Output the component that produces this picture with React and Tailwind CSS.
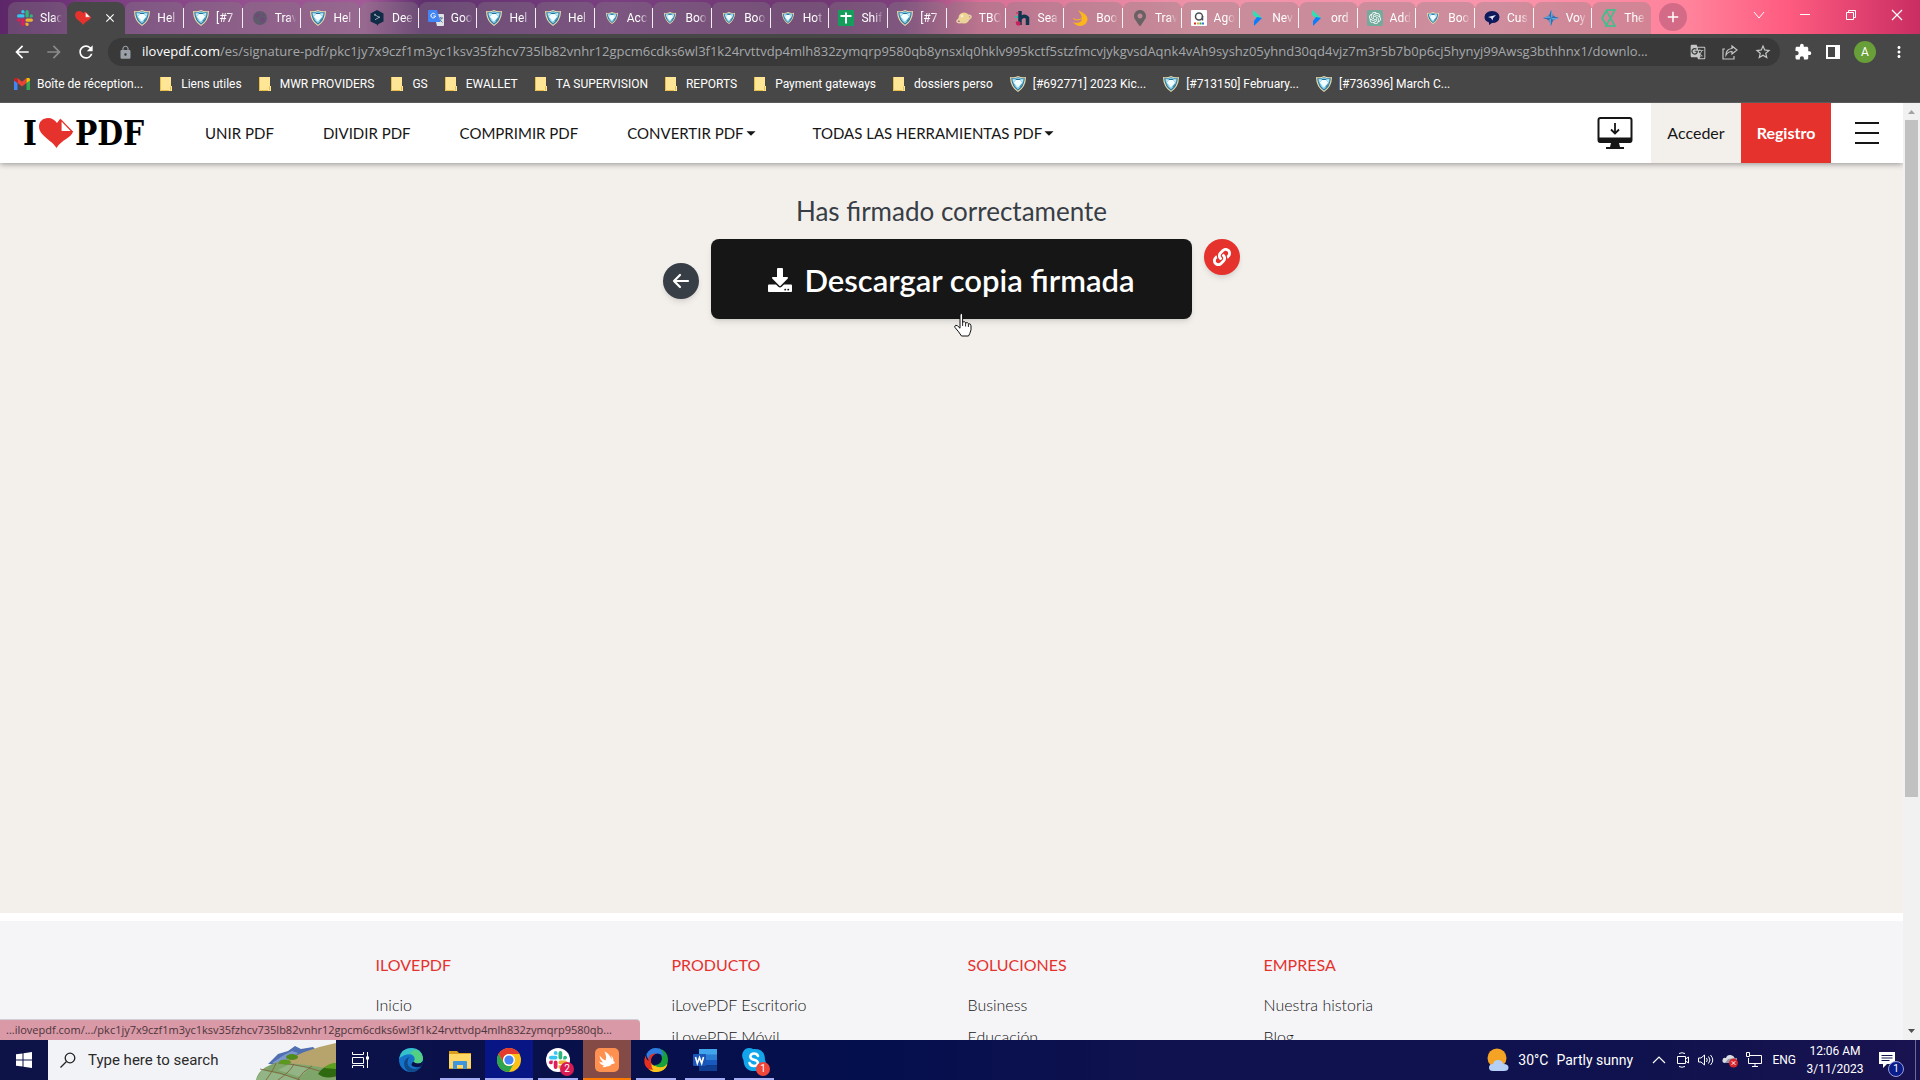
import {
  MdArrowBack,
  MdArrowForward,
  MdRefresh,
  MdLock,
  MdStarBorder,
  MdExtension,
  MdMoreVert,
  MdGTranslate,
  MdAdd,
  MdClose,
  MdArrowDropDown,
} from "react-icons/md";
import { FaDownload, FaLink, FaMapMarkerAlt } from "react-icons/fa";
import { SiOpenai } from "react-icons/si";
import clsx from "clsx";

const URL_HOST = "ilovepdf.com";
const URL_PATH =
  "/es/signature-pdf/pkc1jy7x9czf1m3yc1ksv35fzhcv735lb82vnhr12gpcm6cdks6wl3f1k24rvttvdp4mlh832zymqrp9580qb8ynsxlq0hklv995kctf5stzfmcvjykgvsdAqnk4vAh9syshz05yhnd30qd4vjz7m3r5b7b0p6cj5hynyj99Awsg3bthhnx1/downlo...";
const STATUS_URL =
  "...ilovepdf.com/.../pkc1jy7x9czf1m3yc1ksv35fzhcv735lb82vnhr12gpcm6cdks6wl3f1k24rvttvdp4mlh832zymqrp9580qb...";

/* ---------- favicons ---------- */

function Slack({ className = "size-4" }) {
  const petal =
    "M5.04 15.17a2.52 2.52 0 1 1-2.52-2.52h2.52zM6.31 15.17a2.52 2.52 0 0 1 5.04 0v6.31a2.52 2.52 0 0 1-5.04 0z";
  return (
    <svg viewBox="0 0 24 24" className={className}>
      <path d={petal} fill="#e01e5a" />
      <path d={petal} fill="#36c5f0" transform="rotate(90 12 12)" />
      <path d={petal} fill="#2eb67d" transform="rotate(180 12 12)" />
      <path d={petal} fill="#ecb22e" transform="rotate(270 12 12)" />
    </svg>
  );
}

function Heart({ className = "size-4" }) {
  return (
    <svg viewBox="0 0 34 30" className={className}>
      <path
        d="M17.500 30C13 22 0 18 0 8.500 0 3.500 4 0 9 0c4 0 7 2 9 5l3-4 13 12.500c-1 6-12 8.500-16.500 16.500z"
        fill="#e5322d"
      />
      <path d="M22 2v11.500h11z" fill="#fff" stroke="#e5322d" strokeWidth="1.200" />
    </svg>
  );
}

function Shield({ className = "size-4" }) {
  return (
    <svg viewBox="0 0 16 16" className={className}>
      <path d="M0 1q4 1 8-1 4 2 8 1 0 10-8 15Q0 11 0 1z" fill="#e9dcae" />
      <path d="M1.200 2.200q3.500.5 6.800-1 3.300 1.500 6.800 1-.5 8.500-6.800 12.500Q1.700 10.500 1.200 2.200z" fill="#2b7296" />
      <path d="M2.200 2.800q3 0 5.800-1.200Q10.800 2.800 13.800 2.800q-.5 7-5.800 10.800Q2.700 9.800 2.200 2.800z" fill="#7cc9e8" />
      <path d="M6 4h4l2.200 2.700L8 11.500 3.800 6.700z" fill="#f2fdff" />
      <path d="M3 3.500l2.500.3L3.600 6zM13 3.500l-2.500.3L12.400 6zM5 9l2 1.500.5 1.800z" fill="#d8f2fb" />
      <path d="M5.500 3h5l-1 1h-3zM12.500 7l-3 4 1.500-.5zM3 6.500l1 1.500.5 2z" fill="#246a8e" />
    </svg>
  );
}

function SmallShield() {
  return (
    <span className="flex size-4 items-center justify-center">
      <Shield className="size-3" />
    </span>
  );
}

function Globe() {
  return (
    <svg viewBox="0 0 16 16" className="size-4">
      <circle cx="8" cy="8" r="7" fill="#5f5a6c" />
      <path d="M3 5l3-2 2 1-1 3-3 1zM8 8l4-1 1 3-3 3-2-2zM10 3l3 2-2 1z" fill="#6f4a78" />
    </svg>
  );
}

function DeepL() {
  return (
    <svg viewBox="0 0 16 16" className="size-4">
      <path d="M8 0l6.500 3.500v8L9.500 14 8 16v-1.500L1.500 11.500v-8z" fill="#0f2b46" />
      <path d="M6 4.800l4 2.500-4 2.500" fill="none" stroke="#8ea5b5" />
      <circle cx="6" cy="4.800" r="1" fill="#8ea5b5" />
      <circle cx="10" cy="7.300" r="1" fill="#8ea5b5" />
    </svg>
  );
}

function Translate() {
  return (
    <svg viewBox="0 0 16 16" className="size-4">
      <path d="M6 4h9q1 0 1 1v10q0 1-1 1H9z" fill="#dfe3e6" />
      <path d="M10 8h5M12.500 7v1M11 12l3-4M11.500 9.500l3 3" stroke="#5f7d92" fill="none" />
      <path d="M1 0h8l3.500 12H1q-1 0-1-1V1q0-1 1-1z" fill="#4285f4" />
      <path d="M7.200 4.400A2.300 2.300 0 1 0 7.500 6H5.500" stroke="#fff" fill="none" />
    </svg>
  );
}

function Sheets() {
  return (
    <svg viewBox="0 0 16 16" className="size-4">
      <rect width="16" height="16" rx="1" fill="#159e5b" />
      <path d="M8 2.500v11M2.500 6h11" stroke="#fff" strokeWidth="2" />
    </svg>
  );
}

function Planet() {
  return (
    <svg viewBox="0 0 16 16" className="size-4">
      <circle cx="8" cy="8" r="5.500" fill="#eed58d" />
      <ellipse cx="8" cy="9" rx="7.500" ry="2.500" fill="none" stroke="#e9cfa6" strokeWidth="1.500" transform="rotate(-22 8 9)" />
      <circle cx="6" cy="6" r="1.500" fill="#f8ecc4" />
    </svg>
  );
}

function Hotelbeds() {
  return (
    <svg viewBox="0 0 16 16" className="size-4">
      <path d="M5 1v14M5 9q4-5 7.500-1V15" stroke="#12354f" strokeWidth="3.500" fill="none" />
      <path d="M1 3h3M1 12h4v3H2z" stroke="#c5255a" strokeWidth="1" fill="#c5255a" />
      <path d="M0 7h3" stroke="#34b7a7" strokeWidth="2" />
    </svg>
  );
}

function Crescent() {
  return (
    <svg viewBox="0 0 16 16" className="size-4">
      <path d="M5 0q3 1.500 6 3.500 3.500 2.500 3.500 6Q13.500 16 7 16q-4 0-7-4 5 2 8-.5Q11 8 5 0z" fill="#fbb61a" />
      <path d="M0 8.500q5 3 9-.5" stroke="#fbb61a" fill="none" />
    </svg>
  );
}

function Agoda() {
  return (
    <svg viewBox="0 0 16 16" className="size-4">
      <rect width="16" height="16" rx="1" fill="#fff" />
      <circle cx="8" cy="6.500" r="3.500" fill="none" stroke="#4b4f54" strokeWidth="1.500" />
      <path d="M11.500 6v4.500" stroke="#4b4f54" strokeWidth="1.500" />
      <path d="M3 13.500h2" stroke="#e12d2d" strokeWidth="2" />
      <path d="M6 13.500h2" stroke="#f5a623" strokeWidth="2" />
      <path d="M8.500 13.500h2" stroke="#29a745" strokeWidth="2" />
      <path d="M11 13.500h2" stroke="#3a6fe0" strokeWidth="2" />
    </svg>
  );
}

function Arrow() {
  return (
    <svg viewBox="0 0 16 16" className="size-4">
      <path d="M4 0l9 8H8L4 5z" fill="#2fe0b5" />
      <path d="M13 8l-8 8v-5l3-4z" fill="#0a7cff" />
    </svg>
  );
}

function OpenAi() {
  return (
    <span className="flex size-4 items-center justify-center rounded-xs bg-[#74aa9c] text-white">
      <SiOpenai size={12} />
    </span>
  );
}

function BlueBubble() {
  return (
    <svg viewBox="0 0 16 16" className="size-4">
      <path d="M8 1q7 .5 7.500 6Q15 13 8 13l-3 2v-2.500Q.5 11 .5 7 1 1.500 8 1z" fill="#0e1a5b" />
      <path d="M4 7l8-2-3 3-.5 2.500L7 8z" fill="#e7eaf5" />
    </svg>
  );
}

function Compass() {
  return (
    <svg viewBox="0 0 16 16" className="size-4">
      <circle cx="8" cy="8" r="3.500" fill="none" stroke="#8d7390" />
      <path d="M8 0l2 6 6 2-6 2-2 6-2-6-6-2 6-2z" fill="#2c6fb0" />
      <path d="M8 0v8l2-2zM16 8H8l2 2zM8 16V8l-2 2zM0 8h8L6 6z" fill="#5fa4d8" />
    </svg>
  );
}

function GreenMark() {
  return (
    <svg viewBox="0 0 16 18" className="h-[18px] w-4">
      <path d="M6 1L1 9l5 8M5 1h9L5 17h9L5 1" fill="none" stroke="#2ec68c" strokeWidth="1.500" />
    </svg>
  );
}

function Gmail() {
  return (
    <svg viewBox="0 0 16 12" className="h-3 w-4">
      <path d="M0 1.500V12h3.500V5z" fill="#4285f4" />
      <path d="M16 1.500V12h-3.500V5z" fill="#34a853" />
      <path d="M3.500 0L8 3.700 12.500 0v5L8 8.500 3.500 5z" fill="#ea4335" />
      <path d="M0 1.500Q.5-1 3.500 0v5L0 2.500z" fill="#c5221f" />
      <path d="M16 1.500Q15.500-1 12.500 0v5L16 2.500z" fill="#fbbc04" />
    </svg>
  );
}

function Folder() {
  return (
    <svg viewBox="0 0 12 14" className="h-3.5 w-3">
      <path d="M0 0h11v9h1v5H0z" fill="#ffe596" />
      <path d="M10.500 9.500v4M.5 0v13.500H9" stroke="#e8be4a" fill="none" />
    </svg>
  );
}

const TABS = [
  { title: "Slac", icon: <Slack /> },
  { title: "iLovePDF", icon: <Heart />, active: true },
  { title: "Hel", icon: <Shield /> },
  { title: "[#7", icon: <Shield /> },
  { title: "Trav", icon: <Globe /> },
  { title: "Hel", icon: <Shield /> },
  { title: "Dee", icon: <DeepL /> },
  { title: "Goo", icon: <Translate /> },
  { title: "Hel", icon: <Shield /> },
  { title: "Hel", icon: <Shield /> },
  { title: "Acc", icon: <SmallShield /> },
  { title: "Boo", icon: <SmallShield /> },
  { title: "Boo", icon: <SmallShield /> },
  { title: "Hot", icon: <SmallShield /> },
  { title: "Shif", icon: <Sheets /> },
  { title: "[#7", icon: <Shield /> },
  { title: "TBO", icon: <Planet /> },
  { title: "Sea", icon: <Hotelbeds /> },
  { title: "Boo", icon: <Crescent /> },
  { title: "Trav", icon: <FaMapMarkerAlt size={16} className="text-[#6a6165]" /> },
  { title: "Ago", icon: <Agoda /> },
  { title: "Nev", icon: <Arrow /> },
  { title: "ord", icon: <Arrow /> },
  { title: "Add", icon: <OpenAi /> },
  { title: "Boo", icon: <SmallShield /> },
  { title: "Cus", icon: <BlueBubble /> },
  { title: "Voy", icon: <Compass /> },
  { title: "The", icon: <GreenMark /> },
];

const BOOKMARKS = [
  { label: "Boîte de réception...", icon: <Gmail /> },
  { label: "Liens utiles" },
  { label: "MWR PROVIDERS" },
  { label: "GS" },
  { label: "EWALLET" },
  { label: "TA SUPERVISION" },
  { label: "REPORTS" },
  { label: "Payment gateways" },
  { label: "dossiers perso" },
  { label: "[#692771] 2023 Kic...", icon: <Shield /> },
  { label: "[#713150] February...", icon: <Shield /> },
  { label: "[#736396] March C...", icon: <Shield /> },
];

const FOOTER = [
  { heading: "ILOVEPDF", links: ["Inicio"] },
  { heading: "PRODUCTO", links: ["iLovePDF Escritorio", "iLovePDF Móvil"] },
  { heading: "SOLUCIONES", links: ["Business", "Educación"] },
  { heading: "EMPRESA", links: ["Nuestra historia", "Blog"] },
];

/* ---------- browser chrome ---------- */

function Tab({ title, icon, active, divider }) {
  if (active) {
    return (
      <div role="tab" aria-selected="true" aria-label={title} className="flex items-center justify-between rounded-t-lg bg-[#474747] px-2 text-white">
        {icon}
        <button aria-label="Close tab"><MdClose size={14} /></button>
      </div>
    );
  }
  return (
    <div role="tab" aria-selected="false" className="flex items-center justify-between rounded-t-lg bg-[#808080]/35 pl-[9px] text-white">
      <span className="shrink-0">{icon}</span>
      <span className="ml-[7px] w-[26px] whitespace-nowrap text-xs [mask-image:linear-gradient(to_right,black_50%,transparent_85%)]">
        {title}
      </span>
      <span className={clsx("h-5 w-px shrink-0", divider && "bg-white/90")} />
    </div>
  );
}

function TabStrip() {
  return (
    <div className="flex h-[34px] shrink-0 bg-[linear-gradient(90deg,#5d2668_0%,#7d3f83_6%,#95508f_13%,#a35b98_19%,#60306f_22%,#7a3f80_32%,#6f3672_42%,#80407e_47%,#d96e96_51%,#ee92a8_62%,#f994ac_78%,#ff829b_88%,#ff5c80_93%,#c92d62_100%)] pl-2">
      <div role="tablist" className="grid min-w-0 flex-1 auto-cols-fr grid-flow-col pt-0.5">
        {TABS.map((tab, i) => (
          <Tab key={i} {...tab} divider={i > 1 && i < TABS.length - 1} />
        ))}
      </div>
      <div className="flex w-[269px] shrink-0 items-center justify-between pl-2 text-white">
        <button aria-label="New tab" className="flex size-7 items-center justify-center rounded-full bg-[#c0607e]/70">
          <MdAdd size={18} />
        </button>
        <div className="flex h-full items-start gap-8 pr-4 pt-2">
          <button aria-label="Search tabs"><svg viewBox="0 0 14 14" className="size-3.5"><path d="M2 4l5 6 5-6" fill="none" stroke="#fff" /></svg></button>
          <button aria-label="Minimize"><svg viewBox="0 0 14 14" className="size-3.5"><path d="M2 6.500h10" stroke="#fff" /></svg></button>
          <button aria-label="Restore"><svg viewBox="0 0 14 14" className="size-3.5"><path d="M2.500 4.500h7v7h-7zM4.500 4.500v-2h7v7h-2" fill="none" stroke="#fff" /></svg></button>
          <button aria-label="Close"><svg viewBox="0 0 14 14" className="size-3.5"><path d="M2 2l10 10M12 2L2 12" stroke="#fff" strokeWidth="1.200" /></svg></button>
        </div>
      </div>
    </div>
  );
}

function Toolbar() {
  return (
    <div className="flex h-9 shrink-0 items-center bg-[#474747] text-white">
      <div className="flex w-[108px] shrink-0 items-center gap-3 pl-3">
        <button aria-label="Back"><MdArrowBack size={20} /></button>
        <button aria-label="Forward" className="text-[#8b8b8b]"><MdArrowForward size={20} /></button>
        <button aria-label="Reload"><MdRefresh size={20} /></button>
      </div>
      <div className="flex h-7 min-w-0 flex-1 items-center rounded-full bg-[#393939] pl-2.5 pr-2 text-[#c4c7c5]">
        <MdLock size={15} className="shrink-0 text-[#9aa0a6]" />
        <span className="ml-[9px] min-w-0 flex-1 overflow-hidden whitespace-nowrap font-['Open_Sans',sans-serif] text-[13px] text-[#a5a8ab]">
          <span className="text-white">{URL_HOST}</span>
          {URL_PATH}
        </span>
        <div className="flex shrink-0 items-center gap-4">
          <button aria-label="Translate"><MdGTranslate size={16} /></button>
          <button aria-label="Share">
            <svg viewBox="0 0 16 16" className="size-4" fill="none" stroke="currentColor" strokeWidth="1.200">
              <path d="M3 5H1v10h11v-3" />
              <path d="M10 2l5 4-5 4V7.500Q6 7.500 4 11q0-6 6-6.500z" />
            </svg>
          </button>
          <button aria-label="Bookmark"><MdStarBorder size={18} /></button>
        </div>
      </div>
      <div className="flex w-[140px] shrink-0 items-center justify-between pl-3.5 pr-3">
        <button aria-label="Extensions"><MdExtension size={18} /></button>
        <button aria-label="Side panel">
          <svg viewBox="0 0 14 14" className="size-3.5"><path d="M1 1h12v12H1z" fill="none" stroke="#fff" strokeWidth="2" /><path d="M9 1h5v12H9z" fill="#fff" /></svg>
        </button>
        <button aria-label="Profile" className="flex size-[22px] items-center justify-center rounded-full bg-[#689f38] text-xs">A</button>
        <button aria-label="Menu"><MdMoreVert size={18} /></button>
      </div>
    </div>
  );
}

function Bookmarks() {
  return (
    <nav className="flex h-[33px] shrink-0 items-center gap-[17px] overflow-hidden border-b border-[#5a5a5a] bg-[#474747] pb-1 pl-3.5 text-xs text-white">
      {BOOKMARKS.map(({ label, icon }) => (
        <a key={label} href="#" className={clsx("flex shrink-0 items-center whitespace-nowrap", icon ? "gap-[7px]" : "gap-[9px]")}>
          {icon ?? <Folder />}
          {label}
        </a>
      ))}
    </nav>
  );
}

function Scrollbar() {
  return (
    <div aria-hidden="true" className="flex w-[17px] shrink-0 flex-col items-center bg-[#f1f1f1]">
      <svg viewBox="0 0 17 17" className="h-[17px] w-full shrink-0"><path d="M5 11h7L8.500 7z" fill="#a3a3a3" /></svg>
      <div className="min-h-0 w-full flex-1 px-0.5"><div className="h-3/4 bg-[#c1c1c1]" /></div>
      <svg viewBox="0 0 17 17" className="h-[17px] w-full shrink-0"><path d="M5 6h7l-3.500 4z" fill="#505050" /></svg>
    </div>
  );
}

/* ---------- web page ---------- */

function SiteHeader() {
  return (
    <header className="z-10 flex h-[60px] shrink-0 items-center bg-white pl-[23px] text-[15px] text-[#161616] shadow-[0_1px_6px_rgba(0,0,0,0.4)]">
      <a href="#" aria-label="iLovePDF" className="flex items-center font-['DejaVu_Serif_Condensed','DejaVu_Serif',serif] text-[33px] font-bold leading-none text-black">
        I
        <Heart className="mx-0.5 h-[30px] w-[34px]" />
        PDF
      </a>
      <nav className="ml-[61px] flex flex-1 items-center gap-[49px] whitespace-nowrap">
        <a href="#">UNIR PDF</a>
        <a href="#">DIVIDIR PDF</a>
        <a href="#">COMPRIMIR PDF</a>
        <button className="flex items-center">CONVERTIR PDF<MdArrowDropDown size={22} className="-ml-1 -mr-1.5" /></button>
        <button className="ml-2 flex items-center">TODAS LAS HERRAMIENTAS PDF<MdArrowDropDown size={22} className="-ml-1 -mr-1.5" /></button>
      </nav>
      <a href="#" aria-label="Escritorio" className="mr-[18px]">
        <svg viewBox="0 0 36 34" className="h-[34px] w-9">
          <rect x="1.500" y="2" width="33" height="24" rx="2" fill="none" stroke="#161616" strokeWidth="2" />
          <path d="M1.500 21.500h33V25q0 1.500-1.500 1.500H3q-1.500 0-1.500-1.500z" fill="#161616" />
          <path d="M14 27h8l1 4h4v2H9v-2h4z" fill="#161616" />
          <path d="M18 7v10M14 13.500l4 4 4-4" fill="none" stroke="#161616" strokeWidth="1.800" />
        </svg>
      </a>
      <a href="#" className="flex h-full w-[90px] items-center justify-center bg-[#f3f0ec] text-base">Acceder</a>
      <a href="#" className="flex h-full w-[90px] items-center justify-center bg-[#e5322d] text-base font-bold text-white">Registro</a>
      <button aria-label="Menú" className="flex w-[72px] flex-col items-center gap-2">
        <span className="h-0.5 w-6 bg-[#161616]" />
        <span className="h-0.5 w-6 bg-[#161616]" />
        <span className="h-0.5 w-6 bg-[#161616]" />
      </button>
    </header>
  );
}

function HandCursor() {
  return (
    <svg viewBox="0 0 18 24" className="absolute left-[243px] top-[74px] h-6 w-[18px]">
      <path
        d="M6 2q0-1.500 1.300-1.500T8.600 2v7q2.500-1 3 .8 2.300-.6 2.800.8 2.600 0 2.600 2.200v4q-1 4-2.500 6.200H7.500Q5 19 1 14.500q-.8-1.800.8-2.300 1.600 0 4.200 3z"
        fill="#fff"
        stroke="#111"
        strokeWidth="1"
      />
      <path d="M8.600 9v4M11.600 10v3.500M14.400 11v3" stroke="#111" strokeWidth="0.900" />
    </svg>
  );
}

function Download() {
  return (
    <main className="flex shrink-0 basis-4/5 flex-col items-center bg-[#f3f0ec] pt-8">
      <h1 className="text-[26px] leading-8 text-[#383e45]">Has firmado correctamente</h1>
      <div className="mt-3 flex gap-3">
        <button aria-label="Volver" className="mt-6 flex size-9 items-center justify-center rounded-full bg-[#383e45] text-white shadow-md">
          <svg viewBox="0 0 18 18" className="size-[18px]" fill="none" stroke="currentColor" strokeWidth="2.200" strokeLinecap="round" strokeLinejoin="round">
            <path d="M16 9H2M8 3L2 9l6 6" />
          </svg>
        </button>
        <div className="relative">
          <button className="flex h-20 w-[481px] items-center justify-center gap-3 rounded-lg bg-[#161616] pt-0.5 text-[31px] font-semibold text-white shadow-md">
            <FaDownload size={24} />
            Descargar copia firmada
          </button>
          <HandCursor />
        </div>
        <button aria-label="Copiar enlace" className="flex size-9 items-center justify-center rounded-full bg-[#e5322d] text-white shadow-md">
          <FaLink size={18} />
        </button>
      </div>
    </main>
  );
}

function Footer() {
  return (
    <footer className="shrink-0 border-t-8 border-white bg-[#f5f5f8] pb-10 pt-8 text-base">
      <div className="mx-auto grid max-w-[1184px] grid-cols-4">
        {FOOTER.map(({ heading, links }) => (
          <section key={heading} className="px-4">
            <h2 className="leading-6 text-[#e5322d]">{heading}</h2>
            <ul className="mt-3 font-light text-[#161616]">
              {links.map((link) => (
                <li key={link} className="leading-8"><a href="#">{link}</a></li>
              ))}
            </ul>
          </section>
        ))}
      </div>
    </footer>
  );
}

/* ---------- taskbar ---------- */

function Landscape() {
  return (
    <svg viewBox="0 0 80 40" className="h-full w-20">
      <path d="M12 24L22 14l10-3 7-5 6 3 12-2 6 6-25 12z" fill="#4f6fb0" />
      <path d="M16 23l12-8 8-4 6 2-10 10z" fill="#7d97cd" />
      <path d="M20 26Q45 10 80 3v37H6z" fill="#b7a36c" />
      <path d="M0 40Q2 28 22 22q35 3 58 8v10z" fill="#7fa56b" />
      <path d="M6 30l26 6 10 4H0zM34 24l20 4-10 9-22-7z" fill="#93b585" />
      <path d="M4 29q20 3 40 11M20 23q-2 6-10 17M38 24q-4 8-16 16M56 26q-10 6-14 13M22 23q30 2 58 14" fill="none" stroke="#7c5d3b" strokeWidth=".8" />
      <ellipse cx="36" cy="17" rx="6" ry="3" fill="#4e8a1c" />
      <ellipse cx="29" cy="22" rx="6" ry="2.500" fill="#5b981f" />
      <path d="M62 34q4-8 18-11v13q-10 4-18-2z" fill="#2f6a10" />
      <path d="M68 28q5-5 12-5v6z" fill="#5fa022" />
    </svg>
  );
}

function Edge() {
  return (
    <svg viewBox="0 0 24 24" className="size-6">
      <circle cx="12" cy="12" r="12" fill="#1473c8" />
      <path d="M0 11Q2 0 12.500 0 23 .5 24 10q0 5-5 5.500-4 0-4.500-2 2-1.500 1-4Q13 5 8 6.500 2 8 0 11z" fill="#35c1c9" />
      <path d="M16 1.500q7 2 8 9-1 5-5 5-4 0-4.500-2 2-1.500 1-4.500Q14 6 11 5z" fill="#5bd36f" opacity=".8" />
      <path d="M9 12q-2 6 4 8.500 5 1.500 9-2Q18 24 12 24 5 22.500 5 15q1-5 6-6-2 1-2 3z" fill="#114a8b" />
      <path d="M14.500 13.500q1 2 4.500 2 3.500 0 4.800-2.500.4 3-1.800 5.500-5 1.500-9-.5-1.500-2 1.500-4.500z" fill="#0b1149" />
    </svg>
  );
}

function Explorer() {
  return (
    <svg viewBox="0 0 24 20" className="h-5 w-6">
      <path d="M1 1h8l2 2h12v16H1z" fill="#d99e1b" />
      <path d="M1 4h22v14H1z" fill="#ffd766" />
      <path d="M5 19v-7q0-1 1-1h12q1 0 1 1v7h-4v-4H9v4z" fill="#3f96dd" />
    </svg>
  );
}

function Chrome() {
  return (
    <svg viewBox="0 0 24 24" className="size-6">
      <circle cx="12" cy="12" r="12" fill="#fbc116" />
      <path d="M1.600 6A12 12 0 0 1 22.400 6H12a6 6 0 0 0-5.200 9z" fill="#e33b2e" />
      <path d="M1.600 6a12 12 0 0 0 10.400 18l5.200-9a6 6 0 0 1-10.400 0z" fill="#2da44e" />
      <circle cx="12" cy="12" r="6" fill="#fff" />
      <circle cx="12" cy="12" r="4.600" fill="#4285f4" />
    </svg>
  );
}

function Badge({ children, className }) {
  return (
    <span className={clsx("absolute -bottom-1 -right-1 flex size-3.5 items-center justify-center rounded-full text-[10px] leading-none text-white", className)}>
      {children}
    </span>
  );
}

function SlackApp() {
  return (
    <span className="relative flex size-6 items-center justify-center rounded-full bg-white">
      <Slack className="size-[18px]" />
      <Badge className="bg-[#d81b52]">2</Badge>
    </span>
  );
}

function Swift() {
  return (
    <svg viewBox="0 0 24 24" className="size-6">
      <rect width="24" height="24" rx="5" fill="#ff9150" />
      <path
        d="M9.500 3.500q5 2 7 8 .5-2-.5-4.500 2.500 2.500 2.500 6 2 1 1 2.500L17 16q-2 2.500-5.500 2.500-1.500 1-4 .5l1.500-1.500q-3.500-.5-5-4 2 1 4 1Q4.500 11 4.500 7.500 7 11 10.500 12.500 12 9 9.500 3.500z"
        fill="#fff"
      />
    </svg>
  );
}

function Swirl() {
  return (
    <svg viewBox="0 0 24 24" className="size-6">
      <path d="M20.500 15Q16 20 8 17q0 4 4 6.500 8 1 11-6Q24 11 20 6.500q2 4 .5 8.500z" fill="#f7c51b" />
      <path d="M15 .5Q24 3 24 11q0 6-4 8-6 1.500-10-2 7 0 8-6Q18 4 10 3q4-1 5-2.500z" fill="#17a33a" />
      <path d="M2.500 6Q7-2 16 .7q3.500 3 3.500 8Q16 4.500 11 6q-4 1-6 6.500Q2 9 2.500 6z" fill="#2f7de1" />
      <path d="M1.500 7.500Q-2 17 5 21.500q4 3.500 9 2Q7 20 7 13q0-5 5-7.500Q4 5 4.500 13 2 11 1.500 7.500z" fill="#e5301f" />
      <path d="M4.500 21Q9 25.500 15 23.500q6-2 8.500-7.500-4 4-9 3.500Q9 19 7.500 15q-.5 4 1.500 7z" fill="#f7c51b" />
    </svg>
  );
}

function Word() {
  return (
    <svg viewBox="0 0 24 22" className="h-[22px] w-6">
      <path d="M6 0h18v6H6z" fill="#41a5ee" />
      <path d="M6 5.500h18V11H6z" fill="#2b7cd3" />
      <path d="M6 11h18v5.500H6z" fill="#185abd" />
      <path d="M6 16.500h18V22H6z" fill="#103f91" />
      <rect y="5" width="13" height="12" rx="1" fill="#1a56b8" />
      <path d="M2.500 8l1.800 6.500 2.200-6 2.200 6L10.500 8" fill="none" stroke="#fff" strokeWidth="1.600" />
    </svg>
  );
}

function Skype() {
  return (
    <span className="relative">
      <svg viewBox="0 0 24 24" className="size-6">
        <path d="M7 0q3 0 4 1 12-1 12 11 2 4-1 8-3 4-8 3Q2 24 1.500 12-1 8 1 4 3 0 7 0z" fill="#12a5ea" />
        <path d="M16 8q-1-2.500-4-2.500T8.300 8.300Q8.500 11 12 11.700t4 3.300q-.5 3-4 3t-4.500-3" fill="none" stroke="#fff" strokeWidth="2.500" strokeLinecap="round" />
      </svg>
      <Badge className="bg-[#f0463a]">1</Badge>
    </span>
  );
}

const APPS = [
  { name: "Edge", icon: <Edge /> },
  { name: "Explorer", icon: <Explorer />, bar: "bg-[#a7adf2]" },
  { name: "Chrome", icon: <Chrome />, bar: "bg-[#a7adf2]", tile: "bg-[#071684]", full: true },
  { name: "Slack", icon: <SlackApp />, bar: "bg-[#a7adf2]" },
  { name: "Recorder", icon: <Swift />, bar: "bg-[#ff7a00]", tile: "bg-[#844a45]", full: true },
  { name: "Photos", icon: <Swirl />, bar: "bg-[#a7adf2]" },
  { name: "Word", icon: <Word />, bar: "bg-[#a7adf2]" },
  { name: "Skype", icon: <Skype />, bar: "bg-[#a7adf2]" },
];

function Taskbar() {
  return (
    <div className="flex h-10 shrink-0 items-center bg-[linear-gradient(90deg,#0d1247,#0b1149_20%,#040f4d_45%,#0f124e_60%,#0f124e_85%,#191350)] text-white">
      <button aria-label="Start" className="flex w-12 shrink-0 justify-center">
        <svg viewBox="0 0 16 16" className="size-4"><path d="M0 2.300L6.500 1.400v6.100H0zM7.500 1.200L16 0v7.500H7.500zM0 8.500h6.500v6.100L0 13.700zM7.500 8.500H16V16l-8.500-1.200z" fill="#fff" /></svg>
      </button>
      <label className="flex h-full w-72 shrink-0 items-center bg-[#f2f3f7] pl-3 text-[#222]">
        <svg viewBox="0 0 16 16" className="size-4 shrink-0"><circle cx="10" cy="6" r="4.800" fill="none" stroke="#222" strokeWidth="1.300" /><path d="M6.500 9.500L.5 15.500" stroke="#222" strokeWidth="1.300" /></svg>
        <input aria-label="Search" placeholder="Type here to search" className="ml-3 min-w-0 flex-1 bg-transparent text-[15px] outline-none placeholder:text-[#2a2a2a]" />
        <Landscape />
      </label>
      <button aria-label="Task view" className="mr-[3px] flex w-12 shrink-0 justify-center">
        <svg viewBox="0 0 17 16" className="h-4 w-[17px]" fill="none" stroke="#fff"><path d="M.5 0v2.500h11V0M.5 5.500h11v6H.5zM.5 16v-2.500h11V16M15.500 0v16" /><path d="M14 4.500h3v3h-3z" fill="#fff" stroke="none" /></svg>
      </button>
      <div className="flex h-full gap-px">
        {APPS.map(({ name, icon, bar, tile, full }) => (
          <button key={name} aria-label={name} className={clsx("flex w-12 flex-col items-center", tile)}>
            <span className="flex flex-1 items-center pt-0.5">{icon}</span>
            <span className={clsx("h-0.5", full ? "w-full" : "w-10", bar)} />
          </button>
        ))}
      </div>
      <div className="ml-auto flex h-full items-center text-xs">
        <svg viewBox="0 0 24 24" className="size-6">
          <circle cx="11" cy="10" r="9.500" fill="#f5a325" />
          <path d="M7 23q-4 0-4-3.500T7 16q1-4 5-4t5.500 4q5 0 5 3.500T18 23z" fill="#b5cff5" />
        </svg>
        <span className="ml-2 text-sm">30°C</span>
        <span className="ml-2 w-24 text-sm">Partly sunny</span>
        <button aria-label="Hidden icons"><svg viewBox="0 0 14 14" className="size-3.5"><path d="M1 10l6-6 6 6" fill="none" stroke="#fff" strokeWidth="1.200" /></svg></button>
        <div className="ml-2.5 flex items-center gap-2">
          <svg viewBox="0 0 14 16" className="h-4 w-3.5" fill="none" stroke="#fff"><path d="M1.500 4.500h8v7h-8zM9.500 7l3-2v6l-3-2M3 1.500q3-1.500 6 0M3 14.500q3 1.500 6 0" /></svg>
          <svg viewBox="0 0 16 16" className="size-4" fill="none" stroke="#fff"><path d="M.5 6h2.500l3.500-3v10L3 10H.5zM8.500 6q1.500 2 0 4M10.500 4.500q3 3.500 0 7M12.500 3q4.500 5 0 10" /></svg>
          <svg viewBox="0 0 16 16" className="size-4"><path d="M3 11q-3 0-2.500-3T4 6q1-3.500 4.500-3T13 7z" fill="#dcdde3" /><path d="M3 11l3-4 9-1v5z" fill="#9799a8" /><circle cx="11.500" cy="11" r="4.500" fill="#d9252b" /><path d="M9.700 9.200l3.600 3.600M13.300 9.200l-3.600 3.600" stroke="#fff" /></svg>
          <svg viewBox="0 0 16 16" className="size-4" fill="none" stroke="#fff"><path d="M4 3.500h11.500v8H2.500V6M.5.5h3v4h-3zM6 14.500h6M9 11.500v3" /></svg>
          <span className="ml-0.5">ENG</span>
        </div>
        <div className="ml-2 w-[62px] text-center leading-[18px]">
          <div>12:06 AM</div>
          <div>3/11/2023</div>
        </div>
        <button aria-label="Notifications" className="relative ml-3 mr-[19px]">
          <svg viewBox="0 0 18 18" className="size-[18px]"><path d="M1 1h16v12H9l-4 4v-4H1z" fill="#fff" /><path d="M3.500 4.500h11M3.500 7h11M3.500 9.500h8" stroke="#10134f" /></svg>
          <span className="absolute -bottom-2 -right-2 flex size-4 items-center justify-center rounded-full border border-[#9aa0dd] bg-[#0a1c8a] text-[10px]">1</span>
        </button>
        <span className="mr-1 h-full w-px bg-[#6a6c96]" />
      </div>
    </div>
  );
}

export default function App() {
  return (
    <div className="flex h-screen flex-col overflow-hidden font-['Roboto','Noto_Sans',sans-serif]">
      <TabStrip />
      <Toolbar />
      <Bookmarks />
      <div className="relative flex min-h-0 flex-1">
        <div className="flex min-w-0 flex-1 flex-col overflow-hidden bg-[#f5f5f8] font-['Lato',sans-serif]">
          <SiteHeader />
          <Download />
          <Footer />
        </div>
        <Scrollbar />
        <div className="absolute bottom-0 left-0 z-20 flex h-[21px] w-1/3 items-center rounded-tr border-t border-[#cfcfd6] bg-[#d999a6] px-1.5 font-['Open_Sans',sans-serif] text-[11px] text-[#4c353c]">
          {STATUS_URL}
        </div>
      </div>
      <Taskbar />
    </div>
  );
}
